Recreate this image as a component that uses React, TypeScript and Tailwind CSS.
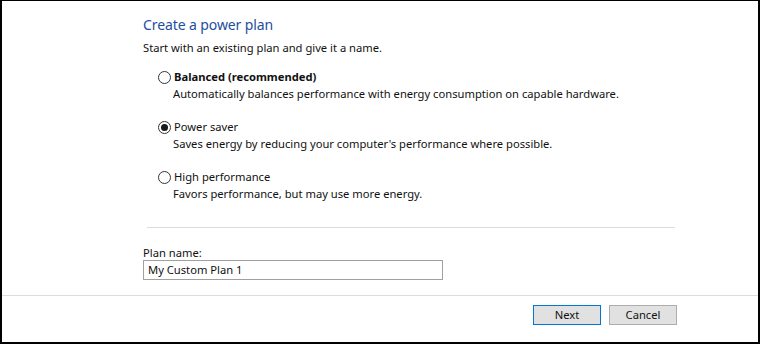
import React from "react";

function Radio({ checked }: { checked?: boolean }) {
  return (
    <span className="flex h-[13px] w-[13px] shrink-0 items-center justify-center rounded-full border border-[#333333] bg-white">
      {checked && <span className="h-[7px] w-[7px] rounded-full bg-[#1a1a1a]" />}
    </span>
  );
}

function Option({
  label,
  desc,
  bold,
  checked,
}: {
  label: string;
  desc: string;
  bold?: boolean;
  checked?: boolean;
}) {
  return (
    <div className="flex flex-col">
      <div className="flex h-[16px] items-center gap-[3px] pl-[15px]">
        <Radio checked={checked} />
        <span className={bold ? "font-bold" : ""}>{label}</span>
      </div>
      <div className="mt-[1px] h-[16px] pl-[30px] leading-[16px]">{desc}</div>
    </div>
  );
}

export default function App() {
  return (
    <div
      className="flex h-[344px] w-[760px] flex-col border-b-2 border-l-2 border-r-2 border-t border-black bg-white text-[11.2px] leading-[16px] text-[#111111]"
      style={{ fontFamily: '"Noto Sans", "Segoe UI", sans-serif' }}
    >
      <div className="flex h-[294px] flex-col pl-[141px]">
        <h1 className="mt-[14px] text-[14px] leading-[20px] tracking-[-0.1px] text-[#1e4ea0]">Create a power plan</h1>
        <p className="mt-[5px]">Start with an existing plan and give it a name.</p>
        <div className="mt-[13px] flex flex-col gap-[17px]">
          <Option label="Balanced (recommended)" desc="Automatically balances performance with energy consumption on capable hardware." bold />
          <Option label="Power saver" desc="Saves energy by reducing your computer's performance where possible." checked />
          <Option label="High performance" desc="Favors performance, but may use more energy." />
        </div>
        <div className="ml-[4px] mt-[25px] h-px w-[528px] bg-[#dcdcdc]" />
        <div className="mt-[18px] h-[14px] leading-[14px]">Plan name:</div>
        <div className="flex h-[20px] w-[300px] items-center border border-[#a0a0a0] bg-white pl-[4px]">
          My Custom Plan 1
        </div>
      </div>
      <div className="h-px w-full bg-[#dcdcdc]" />
      <div className="flex justify-end gap-[8px] pr-[81px] pt-[9px]">
        <button className="h-[20px] w-[68px] border border-[#0078d7] bg-[#e1e1e1] text-[11.2px] leading-[16px] text-[#111111]">
          Next
        </button>
        <button className="h-[20px] w-[68px] border border-[#adadad] bg-[#e1e1e1] text-[11.2px] leading-[16px] text-[#111111]">
          Cancel
        </button>
      </div>
    </div>
  );
}
